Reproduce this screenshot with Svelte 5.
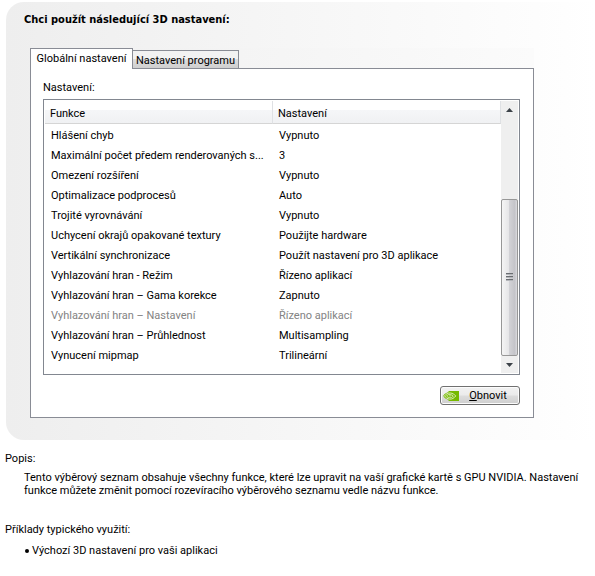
<script>
  let activeTab = $state('global');

  const tabs = [
    { id: 'global', label: 'Globální nastavení' },
    { id: 'program', label: 'Nastavení programu' }
  ];

  const rows = [
    { name: 'Hlášení chyb', value: 'Vypnuto' },
    { name: 'Maximální počet předem renderovaných s...', value: '3' },
    { name: 'Omezení rozšíření', value: 'Vypnuto' },
    { name: 'Optimalizace podprocesů', value: 'Auto' },
    { name: 'Trojité vyrovnávání', value: 'Vypnuto' },
    { name: 'Uchycení okrajů opakované textury', value: 'Použijte hardware' },
    { name: 'Vertikální synchronizace', value: 'Použít nastavení pro 3D aplikace' },
    { name: 'Vyhlazování hran - Režim', value: 'Řízeno aplikací' },
    { name: 'Vyhlazování hran – Gama korekce', value: 'Zapnuto' },
    { name: 'Vyhlazování hran – Nastavení', value: 'Řízeno aplikací', disabled: true },
    { name: 'Vyhlazování hran – Průhlednost', value: 'Multisampling' },
    { name: 'Vynucení mipmap', value: 'Trilineární' }
  ];
</script>

<main>
  <section class="panel">
    <h1>Chci použít následující 3D nastavení:</h1>

    <div class="tab-box">
      <div class="tabs" role="tablist">
        {#each tabs as tab}
          <button
            class="tab"
            class:active={activeTab === tab.id}
            role="tab"
            aria-selected={activeTab === tab.id}
            onclick={() => (activeTab = tab.id)}>{tab.label}</button>
        {/each}
      </div>

      <div class="sheet" role="tabpanel">
        <h2 id="list-label">Nastavení:</h2>

        <div class="list">
          <table aria-labelledby="list-label">
            <thead>
              <tr>
                <th class="name">Funkce</th>
                <th>Nastavení</th>
              </tr>
            </thead>
            <tbody>
              {#each rows as row}
                <tr class:disabled={row.disabled}>
                  <td>{row.name}</td>
                  <td>{row.value}</td>
                </tr>
              {/each}
            </tbody>
          </table>

          <div class="scrollbar">
            <button class="arrow" aria-label="Nahoru">
              <svg width="7" height="4" viewBox="0 0 7 4"><path d="M0 4L3.5 0L7 4Z" fill="#3c4248" /></svg>
            </button>
            <div class="track">
              <div class="thumb">
                <i></i><i></i><i></i>
              </div>
            </div>
            <button class="arrow" aria-label="Dolů">
              <svg width="7" height="4" viewBox="0 0 7 4"><path d="M0 0L3.5 4L7 0Z" fill="#3c4248" /></svg>
            </button>
          </div>
        </div>

        <div class="actions">
          <button class="restore">
            <svg class="logo" width="16" height="10" viewBox="0 0 16 10">
              <path d="M5.5 0H16V10H5.5Z" fill="#76b900" />
              <path d="M0.2 4.8C2.2 1.8 4.6 0.8 7.2 1C10 1.2 12.4 3 14 4.8C12 7.6 9.4 9.2 6.6 9C3.8 8.8 1.4 7.2 0.2 4.8Z" fill="#76b900" />
              <path d="M1.6 4.8C3 2.8 5 1.9 7.2 2C9.8 2.2 11.4 3.6 12.8 4.9C11 7.2 9 8.3 6.6 8.1C4.4 7.9 2.6 6.7 1.6 4.8Z" fill="none" stroke="#e4f1cb" stroke-width="0.9" />
              <path d="M3.6 5C4.4 3.8 5.7 3.3 7.1 3.5C8.6 3.7 9.6 4.3 10.3 5C9.5 6.2 8.2 6.8 6.8 6.7C5.3 6.6 4.3 6 3.6 5Z" fill="none" stroke="#e4f1cb" stroke-width="0.8" />
              <path d="M6 5C6.4 4.5 7.4 4.4 8.1 5C7.6 5.6 6.5 5.6 6 5Z" fill="#e4f1cb" />
            </svg>
            <span><u>O</u>bnovit</span>
          </button>
        </div>
      </div>
    </div>
  </section>

  <section class="info">
    <h2>Popis:</h2>
    <p>
      Tento výběrový seznam obsahuje všechny funkce, které lze upravit na vaší grafické kartě s GPU NVIDIA. Nastavení
      funkce můžete změnit pomocí rozevíracího výběrového seznamu vedle názvu funkce.
    </p>
  </section>

  <section class="info">
    <h2>Příklady typického využití:</h2>
    <ul>
      <li>Výchozí 3D nastavení pro vaši aplikaci</li>
    </ul>
  </section>
</main>

<style>
  :global(body) {
    margin: 0;
    background: #fff;
  }
  main {
    padding-top: 2px;
    font-family: Tahoma, Roboto, sans-serif;
    font-size: 11px;
    line-height: 13px;
    color: #000;
  }
  h1,
  h2 {
    margin: 0;
    font-size: 11px;
    font-weight: normal;
  }
  button {
    font: inherit;
    color: inherit;
    padding: 0;
  }

  .panel {
    margin-left: 6px;
    padding: 11px 61px 22px 24px;
    border-radius: 18px 0 0 18px;
    background: linear-gradient(to right, #eeeeee, #fdfdfd 90%, #fff);
  }
  h1 {
    margin-left: -6px;
    margin-bottom: 22px;
    font-family: Tahoma, "DejaVu Sans Condensed", sans-serif;
    font-weight: bold;
  }

  .tabs {
    display: flex;
    align-items: flex-end;
    background: linear-gradient(to right, #efefef, #fbfbfb);
  }
  .tab {
    height: 18px;
    width: 106px;
    padding-top: 1px;
    border: 1px solid #898c95;
    border-left: none;
    border-bottom: none;
    background: linear-gradient(#f2f2f2 45%, #dddddd 50%, #cfcfcf);
    white-space: nowrap;
  }
  .tab.active {
    width: 103px;
    height: 21px;
    margin-bottom: -1px;
    padding-bottom: 2px;
    border-left: 1px solid #898c95;
    background: #fff;
    position: relative;
  }
  .sheet {
    padding: 12px 13px;
    border: 1px solid #898c95;
    background: #fff;
  }
  .sheet h2 {
    margin-left: -1px;
    margin-bottom: 5px;
  }

  .list {
    display: flex;
    padding: 1px;
    height: 272px;
    margin-left: -1px;
    border: 1px solid #828790;
  }
  table {
    flex: 1;
    width: 100%;
    min-width: 0;
    align-self: flex-start;
    table-layout: fixed;
    border-collapse: separate;
    border-spacing: 0;
  }
  th {
    height: 20px;
    padding: 2px 0 0 5px;
    border-bottom: 1px solid #d5d5d5;
    border-right: 1px solid #dfe1e4;
    background: linear-gradient(#fff 40%, #f5f6f8 42%, #f0f1f3);
    font-weight: normal;
    text-align: left;
  }
  th.name {
    width: 222px;
  }
  td {
    height: 18px;
    padding: 2px 4px 0 6px;
    overflow: hidden;
    text-overflow: ellipsis;
    white-space: nowrap;
  }
  .disabled {
    color: #838383;
  }

  .scrollbar {
    display: flex;
    flex-direction: column;
    flex: none;
    width: 17px;
    background: #efefef;
  }
  .arrow {
    display: flex;
    align-items: center;
    justify-content: center;
    height: 17px;
    border: none;
    background: none;
  }
  .track {
    display: flex;
    flex-direction: column;
    justify-content: flex-end;
    flex: 1;
  }
  .thumb {
    display: flex;
    flex-direction: column;
    align-items: center;
    justify-content: center;
    gap: 1px;
    height: 66%;
    box-sizing: border-box;
    border: 1px solid #979797;
    border-radius: 2px;
    background: linear-gradient(to right, #f5f5f5, #e6e6e8 45%, #d2d2d6 50%, #c4c4c9 85%, #dcdce0);
  }
  .thumb i {
    width: 7px;
    height: 2px;
    background: linear-gradient(#6a6d71 50%, #b4b6ba 50%);
  }

  .actions {
    display: flex;
    justify-content: flex-end;
    padding-top: 11px;
  }
  .restore {
    display: flex;
    align-items: center;
    width: 80px;
    height: 19px;
    padding: 0 2px;
    border: 1px solid #707070;
    border-radius: 3px;
    background: linear-gradient(#f2f2f2, #ebebeb 48%, #dddddd 52%, #cfcfcf);
    box-shadow: inset 0 0 0 1px #fcfcfc;
  }
  .restore span {
    flex: 1;
    text-align: center;
  }

  .info {
    padding: 12px 12px 0 5px;
  }
  .info p,
  .info ul {
    margin: 6px 0 14px 19px;
    padding: 0;
  }
  .info ul {
    margin-top: 8px;
    list-style: none;
  }
  li {
    display: flex;
    align-items: center;
    gap: 3px;
  }
  li::before {
    content: '';
    width: 4px;
    height: 4px;
    margin-left: 1px;
    border-radius: 50%;
    background: #000;
  }
</style>
